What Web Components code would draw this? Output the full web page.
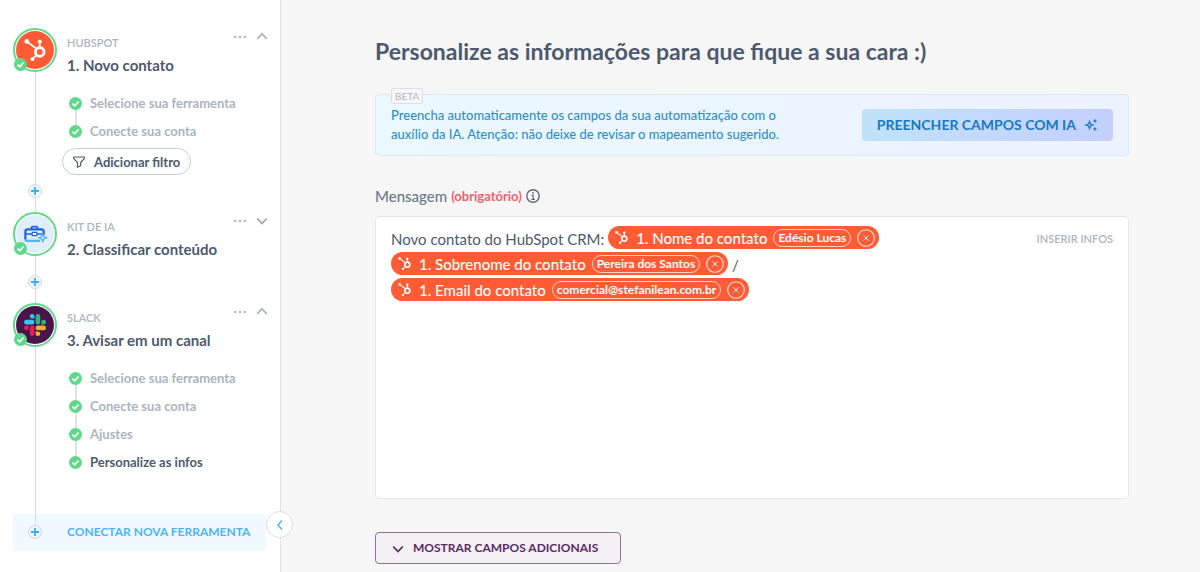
<!DOCTYPE html>
<html lang="pt-BR">
<head>
<meta charset="utf-8">
<meta name="viewport" content="width=device-width, initial-scale=1">
<title>Editor de automação</title>
<style>
  :root {
    --ink: #4d5a6e;
    --muted: #a9b5bf;
    --green: #5fd88a;
    --sky: #4db5f5;
    --rail: #d5dbe0;
    --orange: #ff5c35;
  }
  body { margin: 0; font-family: Lato, "Open Sans", sans-serif; color: var(--ink); background: #f6f6f6; }
</style>
</head>
<body>
<automation-app></automation-app>

<script>
const define = (name, html, setup) => {
  const template = document.createElement('template');
  template.innerHTML = html;
  customElements.define(name, class extends HTMLElement {
    constructor() {
      super();
      this.attachShadow({ mode: 'open' }).append(template.content.cloneNode(true));
    }
    connectedCallback() { if (setup) setup(this, this.shadowRoot); }
  });
};

/* Brand marks and pictograms, chosen by the name attribute */
const hubspotPath = 'M18.164 7.93V5.084a2.198 2.198 0 001.267-1.978v-.067A2.2 2.2 0 0017.238.845h-.067a2.2 2.2 0 00-2.193 2.193v.067a2.196 2.196 0 001.252 1.973l.013.006v2.852a6.22 6.22 0 00-2.969 1.31l.012-.01-7.828-6.095A2.497 2.497 0 104.3 4.656l-.012.006 7.697 5.991a6.176 6.176 0 00-1.038 3.446c0 1.343.425 2.588 1.147 3.607l-.013-.02-2.342 2.343a1.968 1.968 0 00-.58-.095h-.002a2.033 2.033 0 102.033 2.033 1.978 1.978 0 00-.1-.595l.005.014 2.317-2.317a6.247 6.247 0 104.782-11.134l-.036-.005zm-.964 9.378a3.206 3.206 0 113.215-3.207v.002a3.206 3.206 0 01-3.207 3.207z';
const slackPath = 'M5.042 15.165a2.528 2.528 0 0 1-2.52 2.523A2.528 2.528 0 0 1 0 15.165a2.527 2.527 0 0 1 2.522-2.52h2.52v2.52zM6.313 15.165a2.527 2.527 0 0 1 2.521-2.52 2.527 2.527 0 0 1 2.521 2.52v6.313A2.528 2.528 0 0 1 8.834 24a2.528 2.528 0 0 1-2.521-2.522v-6.313z';
const icons = {
  hubspot: `<svg viewBox="0 0 24 24" fill="#fff"><path d="${hubspotPath}"/></svg>`,
  slack: `<svg viewBox="0 0 24 24"><path fill="#e01e5a" d="${slackPath}"/><path fill="#36c5f0" transform="rotate(90 12 12)" d="${slackPath}"/><path fill="#2eb67d" transform="rotate(180 12 12)" d="${slackPath}"/><path fill="#ecb22e" transform="rotate(270 12 12)" d="${slackPath}"/></svg>`,
  kit: `<svg viewBox="0 0 24 24" fill="none"><path d="M8 6.500q0-2.500 2-2.500h3q2 0 2 2.500" stroke="#1f63d8" stroke-width="2"/><path d="M1.500 18V9.500q0-2.500 2.500-2.500h15q2.500 0 2.500 2.500v3.500" stroke="#1f63d8" stroke-width="2.400"/><path d="M2 12h7m5 0h7" stroke="#1f63d8" stroke-width="1.600"/><path d="M9 10.200h5v3.600h-5z" stroke="#1f63d8" stroke-width="1.300" fill="#fff"/><path d="M1.500 17.500q0 2 2 2h14" stroke="#52b4f2" stroke-width="2.400"/><path d="M20.500 12l1.200 2.800 2.800 1.200-2.800 1.200-1.200 2.800-1.200-2.800-2.800-1.200 2.800-1.200z" fill="#fff" stroke="#52b4f2" stroke-width="1.600"/></svg>`,
  check: `<svg viewBox="0 0 14 14"><circle cx="7" cy="7" r="7" fill="#5fd88a"/><path d="M3.800 7.200l2.300 2.200 4.200-4.500" fill="none" stroke="#fff" stroke-width="1.800"/></svg>`,
  dots: `<svg viewBox="0 0 12 12" fill="#a3afb9"><circle cx="1.200" cy="7" r="1.150"/><circle cx="6" cy="7" r="1.150"/><circle cx="10.800" cy="7" r="1.150"/></svg>`,
  up: `<svg viewBox="0 0 12 12" fill="none" stroke="#a9b5bf" stroke-width="1.700"><path d="M1.200 8.800L6 3.800l4.800 5"/></svg>`,
  down: `<svg viewBox="0 0 12 12" fill="none" stroke="currentColor" stroke-width="1.800"><path d="M1.200 4.500L6 9.500l4.800-5"/></svg>`,
  left: `<svg viewBox="0 0 12 12" fill="none" stroke="#4db5f5" stroke-width="1.500"><path d="M8 1.500L4 6l4 4.500"/></svg>`,
  plus: `<svg viewBox="0 0 14 14"><circle cx="7" cy="7" r="6.500" fill="#eef7fd" stroke="#cfdae2"/><path d="M7 3v8M3 7h8" stroke="#3aaff5" stroke-width="1.800"/></svg>`,
  funnel: `<svg viewBox="0 0 12 12" fill="none" stroke="#4d5a6e" stroke-width="1.200" stroke-linejoin="round"><path d="M.7 1h10.600v1.700L7.700 6.500v3.300L4.500 11.300V6.500L.7 2.700z"/></svg>`,
  info: `<svg viewBox="0 0 14 14" fill="none" stroke="#5d6a7b"><circle cx="7" cy="7" r="6.200" stroke-width="1.400"/><path d="M5.500 6.300h1.700v4M5.300 10.300h3.600" stroke-width="1.200"/><circle cx="7" cy="3.900" r=".9" fill="#5d6a7b" stroke="none"/></svg>`,
  close: `<svg viewBox="0 0 18 18" fill="none" stroke="#fff"><circle cx="9" cy="9" r="8.300" stroke-width="1.100" opacity=".85"/><path d="M6.500 6.500l5 5m0-5l-5 5" stroke-width="1" opacity=".9"/></svg>`,
  sparkles: `<svg viewBox="0 0 14 14" fill="#1b78bd"><path d="M5.500 3.500l1 2.500L9 7 6.500 8l-1 2.500-1-2.500L2 7l2.500-1z" fill="none" stroke="#1b78bd" stroke-width="1.300"/><path d="M11 .8l.7 1.500 1.500.7-1.500.7L11 5.200l-.7-1.500L8.800 3l1.500-.7zM11 8.800l.7 1.500 1.500.7-1.500.7-.7 1.500-.7-1.500-1.500-.7 1.500-.7z"/></svg>`
};
define('ui-icon', `
  <style>
    :host { display: inline-block; width: 12px; height: 12px; flex: none; }
    svg { display: block; width: 100%; height: 100%; overflow: visible; }
  </style><span></span>`,
  (el, root) => { root.querySelector('span').innerHTML = icons[el.getAttribute('name')] || ''; });

/* One row of the check list inside a step */
define('sub-step', `
  <style>
    :host { display: grid; grid-template-columns: 13px 1fr; column-gap: 8px; height: 28px; font-size: 13px; font-weight: 700; color: var(--muted); }
    :host([current]) { color: var(--ink); }
    .track { display: flex; flex-direction: column; align-items: center; }
    .track::after { content: ""; flex: 1; width: 2px; background: #dde2e6; }
    :host(:last-of-type) .track::after { display: none; }
    ui-icon { width: 13px; height: 13px; }
    a { color: inherit; text-decoration: none; line-height: 12px; white-space: nowrap; }
  </style>
  <span class="track"><ui-icon name="check"></ui-icon></span><a href="#"><slot></slot></a>`);

define('flow-step', `
  <style>
    :host { display: grid; grid-template-columns: 44px 1fr; column-gap: 5px; }
    .rail { display: flex; flex-direction: column; align-items: center; }
    .rail i { width: 1px; background: var(--rail); height: 14px; }
    .rail i.grow { flex: 1; }
    .avatar { position: relative; box-sizing: border-box; width: 44px; height: 44px; border: 2px solid var(--green); border-radius: 50%; padding: 1px; background: #fff; }
    .disc { display: grid; place-items: center; height: 100%; border-radius: 50%; background: var(--disc); }
    .disc ui-icon { width: 22px; height: 22px; }
    .badge { position: absolute; left: -1px; bottom: -1px; width: 13px; height: 13px; }
    button { all: unset; cursor: pointer; display: block; line-height: 0; }
    .add ui-icon { width: 14px; height: 14px; }
    :host([last]) .add, :host([last]) .tail { display: none; }
    header { display: flex; justify-content: space-between; padding: 8px 0 0 5px; }
    small { display: block; font-size: 11px; line-height: 14px; color: var(--muted); font-weight: 600; }
    h2 { margin: 6px 0 0; font-size: 15px; line-height: 18px; font-weight: 700; white-space: nowrap; }
    .actions { display: flex; gap: 10px; height: 12px; margin: -6px -2px 0 0; color: #9aa7b2; }
    .list { padding: 23px 0 0 7px; }
    :host([collapsed]) .list { display: none; }
  </style>
  <div class="rail">
    <span class="avatar"><span class="disc"><ui-icon class="brand"></ui-icon></span><ui-icon class="badge" name="check"></ui-icon></span>
    <i class="grow"></i>
    <button class="add" aria-label="Adicionar etapa"><ui-icon name="plus"></ui-icon></button>
    <i class="tail"></i>
  </div>
  <div>
    <header>
      <div><small></small><h2></h2></div>
      <div class="actions">
        <button aria-label="Mais opções"><ui-icon name="dots"></ui-icon></button>
        <button aria-label="Expandir ou recolher"><ui-icon class="toggle"></ui-icon></button>
      </div>
    </header>
    <div class="list"><slot></slot></div>
    <slot name="footer"></slot>
  </div>`,
  (el, root) => {
    root.querySelector('small').textContent = el.getAttribute('tool');
    root.querySelector('h2').textContent = el.getAttribute('heading');
    root.querySelector('.brand').setAttribute('name', el.getAttribute('icon'));
    root.querySelector('.toggle').setAttribute('name', el.hasAttribute('collapsed') ? 'down' : 'up');
    root.querySelectorAll('.brand, .toggle').forEach(i => i.connectedCallback());
  });

define('filter-button', `
  <style>
    :host { display: block; margin-top: -5px; }
    button { display: flex; align-items: center; gap: 9px; box-sizing: border-box; height: 27px; padding: 0 10px; border: 1px solid #c3ccd4; border-radius: 14px; background: #fff; font: 700 13px/16px Lato, sans-serif; color: var(--ink); white-space: nowrap; }
  </style>
  <button><ui-icon name="funnel"></ui-icon><slot></slot></button>`);

define('connect-tool', `
  <style>
    :host { display: block; }
    button { display: grid; grid-template-columns: 44px 1fr; column-gap: 10px; width: 100%; height: 37px; padding: 0; border: 0; border-radius: 4px; background: #f0f9fe; color: var(--sky); font: 700 12px/35px Lato, sans-serif; text-align: left; white-space: nowrap; }
    .rail { display: flex; flex-direction: column; align-items: center; }
    i { width: 1px; height: 11px; background: var(--rail); }
    ui-icon { width: 14px; height: 14px; }
  </style>
  <button><span class="rail"><i></i><ui-icon name="plus"></ui-icon></span><span><slot></slot></span></button>`);

define('flow-sidebar', `
  <style>
    :host { display: block; position: relative; box-sizing: border-box; padding: 28px 14px 21px 13px; background: #fff; border-right: 1px solid #e0e3e5; }
    .one { min-height: 184px; }
    .two { min-height: 91px; }
    .three { min-height: 211px; }
    .collapse { position: absolute; right: -13px; bottom: 34px; width: 27px; height: 27px; padding: 0; display: grid; place-items: center; border: 1px solid #dbe0e4; border-radius: 50%; background: #fff; }
  </style>
  <flow-step class="one" tool="HUBSPOT" heading="1. Novo contato" icon="hubspot" style="--disc:#ff5c35">
    <sub-step>Selecione sua ferramenta</sub-step>
    <sub-step>Conecte sua conta</sub-step>
    <filter-button slot="footer">Adicionar filtro</filter-button>
  </flow-step>
  <flow-step class="two" collapsed tool="KIT DE IA" heading="2. Classificar conteúdo" icon="kit" style="--disc:#e0eefa"></flow-step>
  <flow-step class="three" last tool="SLACK" heading="3. Avisar em um canal" icon="slack" style="--disc:#4a154b">
    <sub-step>Selecione sua ferramenta</sub-step>
    <sub-step>Conecte sua conta</sub-step>
    <sub-step>Ajustes</sub-step>
    <sub-step current>Personalize as infos</sub-step>
  </flow-step>
  <connect-tool>CONECTAR NOVA FERRAMENTA</connect-tool>
  <button class="collapse" aria-label="Recolher painel"><ui-icon name="left"></ui-icon></button>`);

define('ai-banner', `
  <style>
    :host { display: flex; align-items: center; justify-content: space-between; gap: 24px; position: relative; box-sizing: border-box; min-height: 62px; padding: 0 15px; border: 1px solid #d9eafa; border-radius: 4px; background: linear-gradient(100deg, #ebf8ff, #ebf4ff 60%, #edf2ff); }
    .beta { position: absolute; left: 15px; top: -7px; padding: 0 3px; border: 1px solid #dcdfe1; border-radius: 2px; background: #f6f6f6; font-size: 10px; line-height: 14px; color: #b1b8bd; }
    p { margin: 0; font-size: 13px; font-weight: 500; line-height: 19px; color: #2f8fcb; }
    button { display: flex; align-items: center; gap: 8px; height: 32px; padding: 0 15px; border: 0; border-radius: 4px; background: linear-gradient(100deg, #bee3f8, #c3d9fe 50%, #c3cffe); font: 700 14px/16px Lato, sans-serif; color: #1b78bd; white-space: nowrap; }
    ui-icon { width: 14px; height: 14px; }
  </style>
  <span class="beta">BETA</span>
  <p>Preencha automaticamente os campos da sua automatização com o<br>auxílio da IA. Atenção: não deixe de revisar o mapeamento sugerido.</p>
  <button>PREENCHER CAMPOS COM IA <ui-icon name="sparkles"></ui-icon></button>`);

define('field-chip', `
  <style>
    :host { display: inline-flex; align-items: center; box-sizing: border-box; height: 23px; padding: 0 4px 0 7px; border-radius: 12px; background: var(--orange); color: #fff; font-size: 15px; line-height: 18px; font-weight: 500; white-space: nowrap; vertical-align: top; }
    .logo { width: 13px; height: 13px; margin-right: 8px; }
    .value { box-sizing: border-box; height: 18px; margin: 0 6px; padding: 0 4px; border: 1px solid #ffd0c4; border-radius: 9px; font-size: 12px; line-height: 16px; font-weight: 700; }
    button { all: unset; cursor: pointer; display: block; line-height: 0; }
    button ui-icon { width: 18px; height: 18px; }
  </style>
  <ui-icon class="logo" name="hubspot"></ui-icon><slot></slot><span class="value"></span><button aria-label="Remover"><ui-icon name="close"></ui-icon></button>`,
  (el, root) => { root.querySelector('.value').textContent = el.getAttribute('value'); });

define('message-field', `
  <style>
    :host { display: block; }
    .label { display: flex; align-items: center; gap: 4px; height: 20px; font-size: 15px; line-height: 20px; font-weight: 500; color: #6d7989; }
    .label em { font-style: normal; font-weight: 700; font-size: 13px; color: #f2606c; }
    .label ui-icon { width: 14px; height: 14px; }
    .box { display: flex; justify-content: space-between; align-items: flex-start; box-sizing: border-box; min-height: 283px; margin-top: 10px; padding: 9px 15px; background: #fff; border: 1px solid #e5e7e9; border-radius: 5px; }
    .text { flex: 1; outline: none; font-size: 15px; line-height: 27px; }
    .text div { height: 26px; white-space: nowrap; }
    .box > button { padding: 0; border: 0; background: none; margin-top: 6px; font: 600 11px/14px Lato, sans-serif; color: var(--muted); }
  </style>
  <div class="label"><span id="name">Mensagem</span><em>(obrigatório)</em><ui-icon name="info"></ui-icon></div>
  <div class="box">
    <div class="text" contenteditable="true" role="textbox" aria-multiline="true" aria-labelledby="name" spellcheck="false"><div>Novo contato do HubSpot CRM: <field-chip contenteditable="false" value="Edésio Lucas">1. Nome do contato</field-chip></div><div><field-chip contenteditable="false" value="Pereira dos Santos">1. Sobrenome do contato</field-chip> /</div><div><field-chip contenteditable="false" value="comercial@stefanilean.com.br">1. Email do contato</field-chip></div></div>
    <button>INSERIR INFOS</button>
  </div>`);

define('more-fields', `
  <style>
    :host { display: block; }
    button { display: flex; align-items: center; gap: 9px; box-sizing: border-box; height: 32px; padding: 0 22px 0 16px; border: 1px solid #94709c; border-radius: 4px; background: #f3f1f3; font: 700 12px/16px Lato, sans-serif; color: #5b2a66; white-space: nowrap; }
  </style>
  <button><ui-icon name="down"></ui-icon><slot></slot></button>`);

define('automation-app', `
  <style>
    :host { display: grid; grid-template-columns: 281px 1fr; min-height: 100vh; }
    main { padding: 36px 71px 8px 94px; }
    h1 { margin: 0 0 28px; font-size: 23px; line-height: 30px; font-weight: 700; }
    message-field { margin: 30px 0 33px; }
  </style>
  <flow-sidebar></flow-sidebar>
  <main>
    <h1>Personalize as informações para que fique a sua cara :)</h1>
    <ai-banner></ai-banner>
    <message-field></message-field>
    <more-fields>MOSTRAR CAMPOS ADICIONAIS</more-fields>
  </main>`);
</script>
</body>
</html>
